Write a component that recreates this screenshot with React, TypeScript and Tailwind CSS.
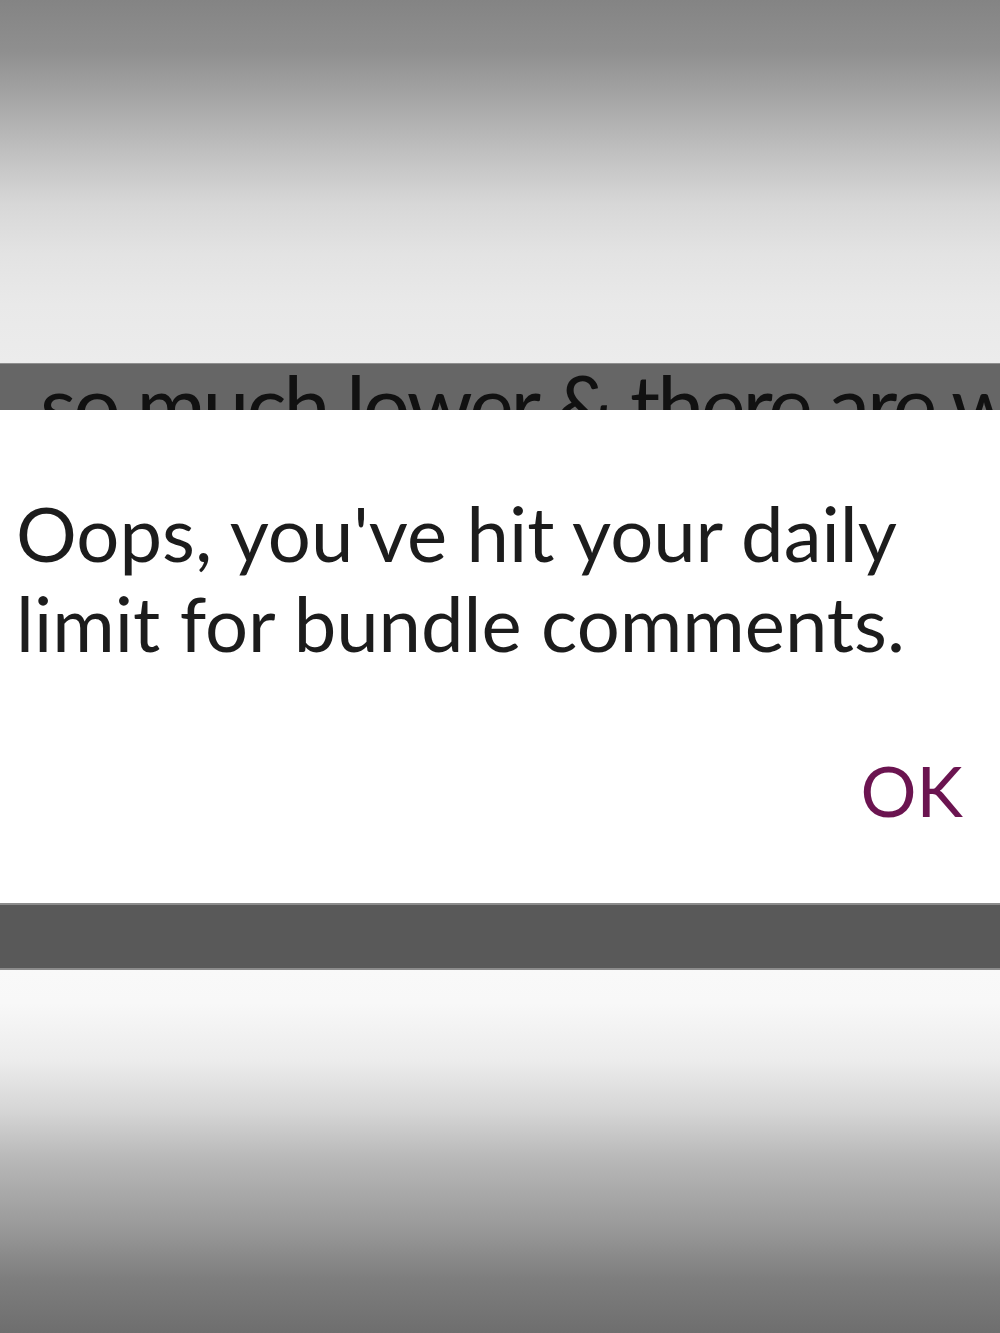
export default function App() {
  return (
    <div className="flex min-h-[1333px] w-[1000px] flex-col overflow-hidden font-['Lato','Noto_Sans',sans-serif]">
      {/* page behind the dialog */}
      <div className="h-[363px] bg-[linear-gradient(to_bottom,#848484_0%,#8f8f8f_14%,#a7a7a7_28%,#c0c0c0_42%,#d7d7d7_56%,#e3e3e3_70%,#e9e9e9_84%,#ececec_100%)]" />

      <div className="h-[47px] overflow-hidden border-t border-[#8e8e8e] bg-[#666666] pl-[40px]">
        <p className="whitespace-nowrap text-[84px] leading-[80px] tracking-[-3px] text-[#111111]">
          so much lower &amp; there are ways
        </p>
      </div>

      {/* dialog */}
      <div className="flex h-[493px] flex-col bg-white pl-[16px] pr-[37px] pt-[78px]">
        <p className="text-[76px] leading-[90px] text-[#1c1c1c]">
          Oops, you've hit your daily
          <br />
          limit for bundle comments.
        </p>
        <div className="mt-[87px] flex justify-end">
          <button className="text-[70px] leading-[70px] text-[#6b1450]">OK</button>
        </div>
      </div>

      <div className="h-[67px] border-y-2 border-y-[#8c8c8c] bg-[#595959]" />

      <div className="flex-1 bg-[linear-gradient(to_bottom,#f9f9f9_0%,#f8f8f8_9%,#ececec_25%,#d5d5d5_39%,#b8b8b8_52%,#999999_71%,#7e7e7e_85%,#6e6e6e_100%)]" />
    </div>
  );
}
